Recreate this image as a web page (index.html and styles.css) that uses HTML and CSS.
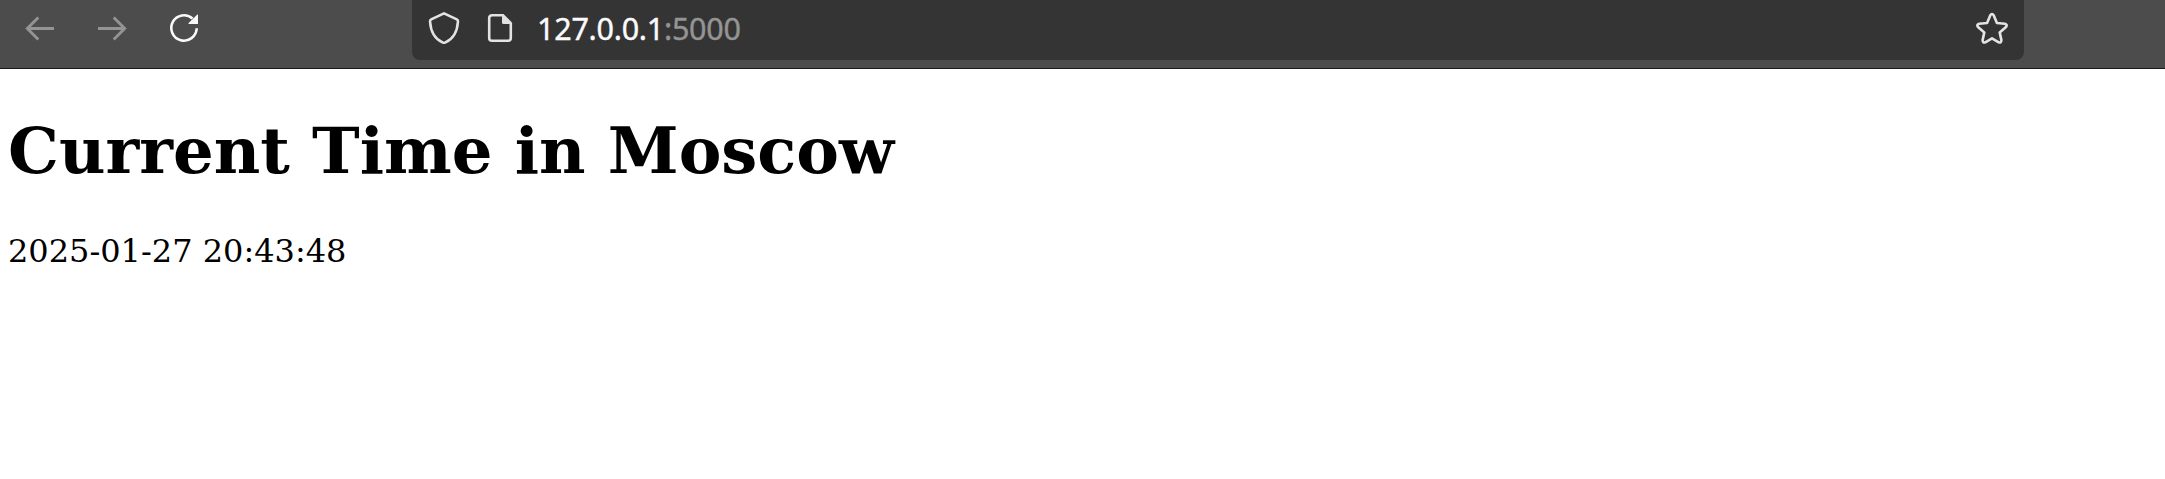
FILE: index.html
```html
<!DOCTYPE html>
<html lang="en">
<head>
<meta charset="utf-8">
<title>Current Time in Moscow</title>
<link rel="stylesheet" href="styles.css">
</head>
<body>
<header class="toolbar">
  <nav class="nav">
    <svg class="icon disabled" viewBox="0 0 32 32"><path d="M30 16.500H3.500M14.300 5.500L3.300 16.500l11 11"/></svg>
    <svg class="icon disabled" viewBox="0 0 32 32"><path d="M2 16.500h26.500M17.700 5.500l11 11-11 11"/></svg>
    <svg class="icon reload" viewBox="0 0 32 32"><path d="M28.700 16.300A12.700 12.700 0 1 1 24.500 6.500"/><path class="solid" d="M30 3v8.500q0 .5-.5.5h-8.600q-.9-.1-.3-.9l8.700-8.600q.6-.4.700.500z"/></svg>
  </nav>
  <div class="address">
    <svg class="icon" viewBox="0 0 32 32"><path d="M16 1.300L28.800 7.400Q30.200 8.100 29.900 10C29.300 19 26 26.500 17.500 30.400Q16 31.100 14.500 30.400C6 26.500 2.700 19 2.100 10Q1.800 8.100 3.200 7.400z"/></svg>
    <svg class="icon page" viewBox="0 0 32 32"><path d="M19 3.200H8a2.800 2.800 0 0 0-2.800 2.800v20a2.800 2.800 0 0 0 2.800 2.800h16a2.800 2.800 0 0 0 2.800-2.800V11"/><path class="solid" d="M18 2h1.500L28 10.500V12h-8.500Q18 12 18 10.500z"/></svg>
    <span class="url">127.0.0.1<span class="port">:5000</span></span>
    <svg class="icon star" viewBox="0 0 32 32"><path d="M14.200 3.500q1.800-3 3.600 0l3.100 7.500 7.900.7q3 .7 1.200 3.200l-6.300 5.500 1.700 7.700q0 3-2.700 2.200L16 26.300l-6.700 4q-2.700.8-2.700-2.200l1.700-7.700L2 14.900q-1.800-2.500 1.200-3.200l7.900-.7z"/></svg>
  </div>
</header>
<main class="content">
  <h1 class="title">Current Time in Moscow</h1>
  <p class="time">2025-01-27 20:43:48</p>
</main>
</body>
</html>
```
FILE: styles.css
```css
body {
  margin: 0;
  background: #fff;
  color: #000;
  font-family: "DejaVu Serif", serif;
}
.toolbar {
  display: flex;
  box-sizing: border-box;
  height: 69px;
  padding: 0 141px 8px 24px;
  background: #4c4c4c;
  border-bottom: 1px solid #1b1a1f;
}
.nav {
  display: flex;
  gap: 40px;
  width: 388px;
  padding-top: 12px;
}
.icon {
  flex: none;
  width: 32px;
  height: 32px;
  fill: none;
  stroke: #e3e3e3;
  stroke-width: 2.6;
  stroke-linejoin: round;
}
.disabled {
  stroke: #949494;
  stroke-width: 2.9;
  stroke-linejoin: miter;
}
.reload {
  stroke: #f9f9f9;
}
.solid {
  fill: #e3e3e3;
  stroke: none;
}
.reload .solid {
  fill: #f9f9f9;
}
.address {
  display: flex;
  flex: 1;
  align-items: flex-start;
  box-sizing: border-box;
  padding: 12px 16px 0;
  background: #343434;
  border-radius: 0 0 8px 8px;
}
.page {
  margin-left: 24px;
}
.url {
  flex: 1;
  margin-left: 21px;
  color: #fbfbfe;
  font: 30.5px/32px "Noto Sans", sans-serif;
  letter-spacing: -0.25px;
  -webkit-text-stroke: 0.4px;
}
.port {
  color: #949494;
}
.content {
  padding: 44px 8px 0;
}
.title {
  margin: 0 0 43px;
  font-size: 64px;
  line-height: 76px;
}
.time {
  margin: 0;
  font-size: 32px;
  line-height: 38px;
}
```
